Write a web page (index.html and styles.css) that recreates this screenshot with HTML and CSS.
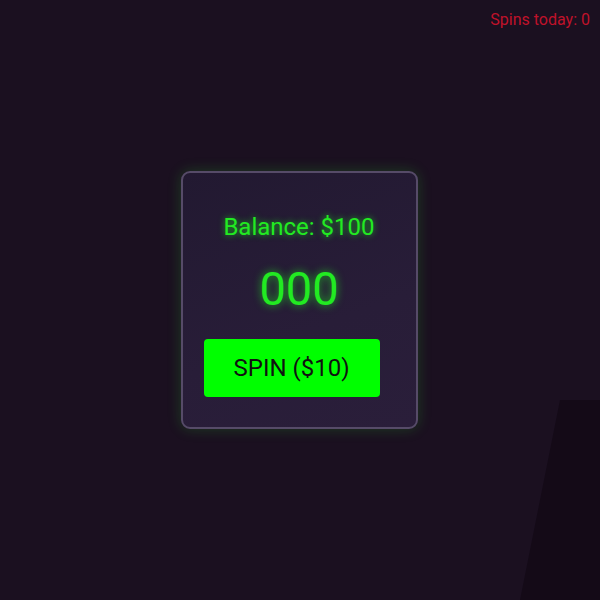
FILE: index.html
```html
<!DOCTYPE html>
<html>
<head>
<meta charset="utf-8">
<link rel="stylesheet" href="styles.css">
</head>
<body>
<div class="counter">Spins today: 0</div>
<div class="shade"></div>
<main class="stage">
  <section class="card">
    <div class="balance">Balance: $100</div>
    <div class="reels">000</div>
    <button class="spin">SPIN ($10)</button>
  </section>
</main>
</body>
</html>
```
FILE: styles.css
```css
html, body {
  margin: 0;
  padding: 0;
  height: 100%;
}
body {
  background: #1b1020;
  font-family: Roboto, "Liberation Sans", sans-serif;
  overflow: hidden;
  position: relative;
}
.counter {
  position: absolute;
  top: 10px;
  right: 10px;
  color: #c0122a;
  font-size: 16px;
  line-height: 19px;
}
.shade {
  position: absolute;
  left: 520px;
  top: 400px;
  width: 80px;
  height: 200px;
  background: #140a17;
  clip-path: polygon(40px 0, 80px 0, 80px 200px, 0 200px);
}
.stage {
  height: 100%;
  display: flex;
  align-items: center;
  justify-content: center;
  position: relative;
}
.card {
  box-sizing: border-box;
  width: 237px;
  height: 258px;
  margin-left: -2px;
  border: 2px solid #564b68;
  border-radius: 9px;
  background: linear-gradient(160deg, #221931 0%, #281d38 60%, #2a1e3a 100%);
  box-shadow: 0 0 14px rgba(40, 220, 40, 0.22);
  display: flex;
  flex-direction: column;
  align-items: center;
  padding: 40px 21px 0;
}
.balance {
  color: #22ea22;
  font-size: 24px;
  line-height: 28px;
  text-shadow: 0 0 6px rgba(30, 235, 30, 0.75);
}
.reels {
  margin-top: 22px;
  color: #22ea22;
  font-size: 47px;
  line-height: 52px;
  text-shadow: 0 0 8px rgba(30, 235, 30, 0.75);
}
.spin {
  align-self: flex-start;
  margin-top: 24px;
  width: 176px;
  height: 58px;
  border: none;
  border-radius: 4px;
  background: #00ff00;
  color: #111111;
  font-family: Roboto, "Liberation Sans", sans-serif;
  font-size: 24px;
  padding: 0;
}
```
